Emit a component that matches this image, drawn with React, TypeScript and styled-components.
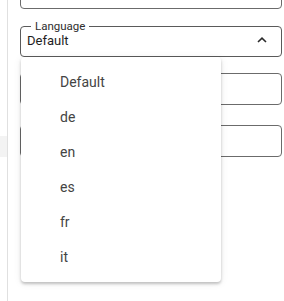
import * as React from 'react';
import styled, { createGlobalStyle } from 'styled-components';

const GlobalStyle = createGlobalStyle`
  html, body {
    margin: 0;
    padding: 0;
    background: #ffffff;
  }
  body {
    font-family: Roboto, 'Liberation Sans', sans-serif;
  }
`;

const languages = ['Default', 'de', 'en', 'es', 'fr', 'it'];

const Page = styled.div`
  display: flex;
  width: 284px;
  height: 301px;
  overflow: hidden;
  background: #ffffff;
`;

const Sidebar = styled.div`
  display: flex;
  flex-direction: column;
  width: 7px;
  flex-shrink: 0;
  border-right: 1px solid #e0e0e0;
`;

const NavItem = styled.div<{ $active?: boolean }>`
  height: 21px;
  margin-top: 136px;
  background: ${({ $active }) => ($active ? '#f3f3f3' : 'transparent')};
`;

const Form = styled.div`
  display: flex;
  flex-direction: column;
  width: 262px;
  padding-left: 12px;
`;

const TextField = styled.div<{ $mt: number }>`
  height: 32px;
  box-sizing: border-box;
  margin-top: ${({ $mt }) => $mt}px;
  border: 1px solid #6b6b6b;
  border-radius: 4px;
  flex-shrink: 0;
`;

const SelectWrap = styled.div`
  position: relative;
  margin-top: 11px;
  z-index: 2;
`;

const SelectBox = styled.fieldset`
  margin: 0;
  min-width: 0;
  padding: 0 12px 7px 6px;
  border: 1px solid #5a5a5a;
  border-radius: 4px;
`;

const Label = styled.legend`
  margin-left: 4px;
  padding: 0 4px;
  font-size: 11.5px;
  line-height: 13px;
  color: #2e2e2e;
`;

const ValueRow = styled.div`
  display: flex;
  align-items: center;
  justify-content: space-between;
  height: 16px;
`;

const Value = styled.span`
  font-size: 13px;
  line-height: 16px;
  color: #1e1e1e;
`;

const Chevron = styled.svg`
  width: 10px;
  height: 6px;
  margin-right: 2px;
  margin-top: -2px;
`;

const Menu = styled.ul`
  position: absolute;
  top: 100%;
  left: 1px;
  width: 200px;
  margin: 0;
  padding: 7px 0 8px;
  list-style: none;
  background: #ffffff;
  border-radius: 4px;
  box-shadow: 0 2px 3px rgba(0, 0, 0, 0.22), 0 1px 8px rgba(0, 0, 0, 0.08);
`;

const MenuItem = styled.li`
  display: flex;
  align-items: center;
  height: 35px;
  padding-left: 39px;
  font-size: 14px;
  color: #444444;
`;

export default function App() {
  return (
    <Page>
      <GlobalStyle />
      <Sidebar>
        <NavItem $active />
      </Sidebar>
      <Form>
        <TextField $mt={-23} />
        <SelectWrap>
          <SelectBox>
            <Label>Language</Label>
            <ValueRow>
              <Value>Default</Value>
              <Chevron viewBox="0 0 10 6">
                <polyline
                  points="1,5 5,1.2 9,5"
                  fill="none"
                  stroke="#2b2b2b"
                  strokeWidth="1.6"
                />
              </Chevron>
            </ValueRow>
          </SelectBox>
          <Menu>
            {languages.map((lang) => (
              <MenuItem key={`lang-${lang}`}>{lang}</MenuItem>
            ))}
          </Menu>
        </SelectWrap>
        <TextField $mt={16} />
        <TextField $mt={20} />
      </Form>
    </Page>
  );
}
